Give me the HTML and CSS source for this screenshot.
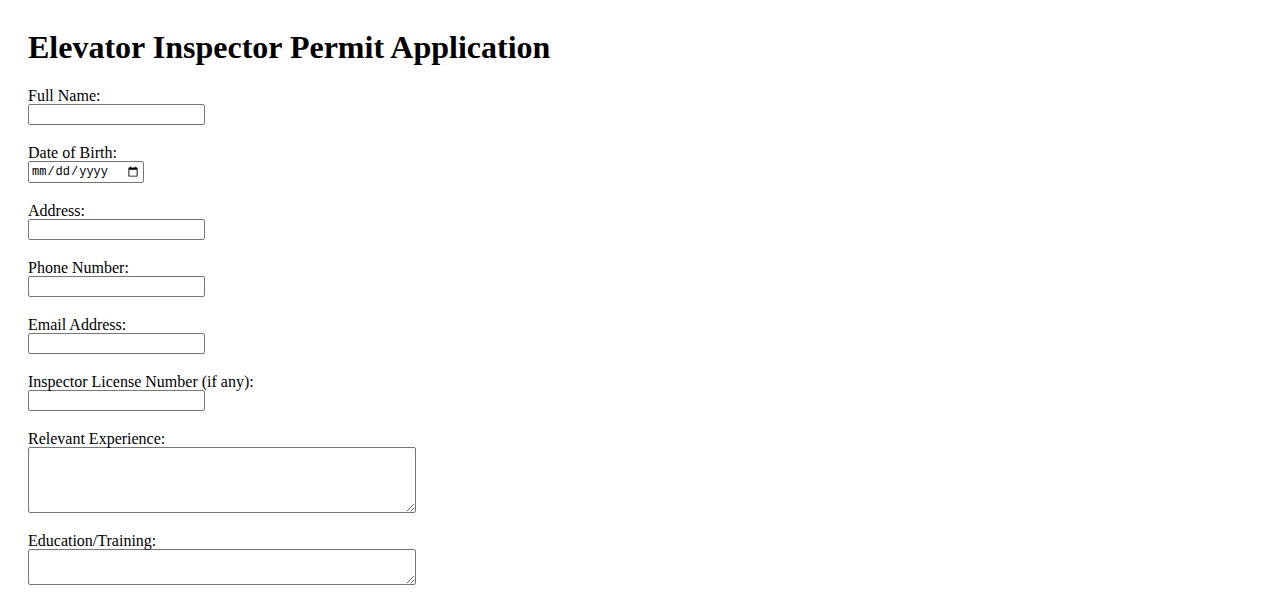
FILE: index.html
```html
<!DOCTYPE html>
<html lang="en">
<head>
  <meta charset="UTF-8">
  <title>Elevator Inspector Permit Application</title>
  <link rel="stylesheet" href="styles.css">
</head>
<body>
  <div class="page">
    <h1>Elevator Inspector Permit Application</h1>
    <form class="permit-form">
      <div class="field">
        <label for="fullName">Full Name:</label>
        <input type="text" id="fullName" class="text-input">
      </div>
      <div class="field">
        <label for="dob">Date of Birth:</label>
        <input type="date" id="dob" class="date-input">
      </div>
      <div class="field">
        <label for="address">Address:</label>
        <input type="text" id="address" class="text-input">
      </div>
      <div class="field">
        <label for="phone">Phone Number:</label>
        <input type="tel" id="phone" class="text-input">
      </div>
      <div class="field">
        <label for="email">Email Address:</label>
        <input type="email" id="email" class="text-input">
      </div>
      <div class="field">
        <label for="license">Inspector License Number (if any):</label>
        <input type="text" id="license" class="text-input">
      </div>
      <div class="field">
        <label for="experience">Relevant Experience:</label>
        <textarea id="experience" class="area-input" rows="4"></textarea>
      </div>
      <div class="field">
        <label for="education">Education/Training:</label>
        <textarea id="education" class="area-input" rows="2"></textarea>
      </div>
    </form>
  </div>
</body>
</html>
```

FILE: styles.css
```css
body {
  margin: 8px;
  font-family: "Liberation Serif", "Times New Roman", serif;
  font-size: 16px;
  color: #000;
  background: #fff;
}
.page {
  padding: 21px 20px 20px;
}
h1 {
  font-size: 32px;
  margin: 0 0 20.8px;
}
.field {
  margin-bottom: 18.4px;
}
.field label {
  display: block;
  line-height: 17.6px;
}
.text-input,
.date-input,
.area-input {
  display: block;
  box-sizing: border-box;
  margin: 0;
  border: 1px solid #767676;
  border-radius: 2px;
  background: #fff;
  font-family: "Liberation Sans", Arial, sans-serif;
  font-size: 13.333px;
}
.text-input {
  width: 177px;
  height: 21px;
  padding: 1px 2px;
}
.date-input {
  width: 116px;
  height: 22px;
  padding: 1px 2px;
  font-family: "Liberation Mono", monospace;
  font-size: 12px;
}
.area-input {
  width: 388px;
  padding: 2px;
  font-family: "Liberation Mono", monospace;
  line-height: 15px;
  resize: both;
}
#experience {
  height: 66px;
}
#education {
  height: 36px;
}
```
